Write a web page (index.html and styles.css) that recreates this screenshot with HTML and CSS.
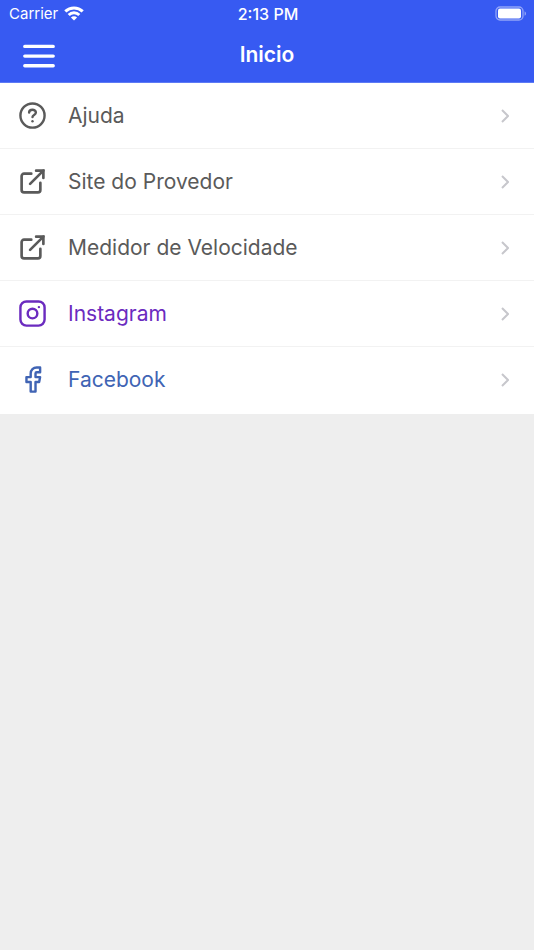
FILE: index.html
```html
<!DOCTYPE html>
<html lang="pt">

<head>
    <meta charset="utf-8">
    <meta name="viewport" content="width=device-width, initial-scale=1">
    <title>Inicio</title>
    <link rel="stylesheet" href="styles.css">
</head>

<body>
    <header class="header">
        <div class="status">
            <div class="carrier">
                <span>Carrier</span>
                <svg width="20" height="15" viewBox="0 0 20 15" fill="none" stroke="#fff" stroke-width="3">
                    <path d="M1.3 5.4a12.5 12.5 0 0 1 17.4 0" />
                    <path d="M4.7 9a7.6 7.6 0 0 1 10.6 0" />
                    <path d="M10 14.6L6.9 11.5a4.4 4.4 0 0 1 6.2 0z" fill="#fff" stroke="none" />
                </svg>
            </div>
            <span class="time">2:13 PM</span>
            <svg class="battery" width="32" height="15" viewBox="0 0 32 15">
                <rect x="1" y="1" width="27" height="13" rx="4" fill="none" stroke="#fff" stroke-opacity="0.45" stroke-width="1.3" />
                <rect x="3" y="2.6" width="23" height="9.8" rx="2" fill="#fff" />
                <path d="M29.6 5.2v4.6c1.8-.8 1.8-3.8 0-4.6z" fill="#fff" fill-opacity="0.5" />
            </svg>
        </div>
        <div class="navbar">
            <button class="menu-button" type="button" aria-label="Menu">
                <svg width="32" height="26" viewBox="0 0 32 26" stroke="#fff" stroke-width="3.4" stroke-linecap="round">
                    <path d="M1.8 4.4h28.4M1.8 14.1h28.4M1.8 23.8h28.4" />
                </svg>
            </button>
            <h1 class="title">Inicio</h1>
        </div>
    </header>

    <nav class="list">
        <a class="item" href="#ajuda">
            <svg class="icon" viewBox="0 0 24 24">
                <circle cx="12" cy="12" r="10" />
                <path d="M9.2 9.6c0-3.1 5.6-3.1 5.6 0 0 2-2.8 1.9-2.8 3.6" />
                <path d="M12 16.8v.01" />
            </svg>
            <span class="label">Ajuda</span>
            <svg class="chevron" viewBox="0 0 8 14"><path d="M1 1l6 6-6 6" /></svg>
        </a>
        <a class="item" href="#site">
            <svg class="icon link" viewBox="0 0 24 24">
                <path d="M18.5 13v6a2 2 0 0 1-2 2H5a2 2 0 0 1-2-2V7.5a2 2 0 0 1 2-2h6" />
                <path d="M15 3h6v6" />
                <path d="M10 14L21 3" />
            </svg>
            <span class="label">Site do Provedor</span>
            <svg class="chevron" viewBox="0 0 8 14"><path d="M1 1l6 6-6 6" /></svg>
        </a>
        <a class="item" href="#medidor">
            <svg class="icon link" viewBox="0 0 24 24">
                <path d="M18.5 13v6a2 2 0 0 1-2 2H5a2 2 0 0 1-2-2V7.5a2 2 0 0 1 2-2h6" />
                <path d="M15 3h6v6" />
                <path d="M10 14L21 3" />
            </svg>
            <span class="label">Medidor de Velocidade</span>
            <svg class="chevron" viewBox="0 0 8 14"><path d="M1 1l6 6-6 6" /></svg>
        </a>
        <a class="item instagram" href="#instagram">
            <svg class="icon" viewBox="0 0 24 24">
                <rect x="2" y="2" width="20" height="20" rx="5" />
                <circle cx="12" cy="12" r="4" />
                <circle cx="17.3" cy="6.7" r="1" fill="currentColor" stroke="none" />
            </svg>
            <span class="label">Instagram</span>
            <svg class="chevron" viewBox="0 0 8 14"><path d="M1 1l6 6-6 6" /></svg>
        </a>
        <a class="item facebook" href="#facebook">
            <svg class="icon" viewBox="0 0 24 24">
                <path d="M18.3 2h-2.8a5 5 0 0 0-5 5v3H7v4h3.5v8h4v-8h3l.8-4h-3.8V7a1 1 0 0 1 1-1h2.8z" />
            </svg>
            <span class="label">Facebook</span>
            <svg class="chevron" viewBox="0 0 8 14"><path d="M1 1l6 6-6 6" /></svg>
        </a>
    </nav>
</body>

</html>
```
FILE: styles.css
```css
body {
    margin: 0;
    background-color: #eeeeee;
    font-family: Inter, "Liberation Sans", sans-serif;
}

.header {
    background-color: #375af2;
    color: white;
    border-bottom: 1px solid #5d7af5;
}

.status {
    display: grid;
    grid-template-columns: 1fr auto 1fr;
    align-items: center;
    height: 27px;
    padding: 0 7px 0 9px;
    font-size: 16px;
}

.carrier {
    display: flex;
    align-items: center;
    gap: 6px;
    font-size: 15px;
}

.time {
    font-weight: 500;
}

.battery {
    justify-self: end;
}

.navbar {
    display: grid;
    grid-template-columns: 1fr auto 1fr;
    align-items: center;
    height: 55px;
    padding: 0 23px;
}

.menu-button {
    display: flex;
    justify-self: start;
    padding: 0;
    border: none;
    background: none;
}

.title {
    margin: 0;
    font-size: 21px;
    font-weight: 600;
}

.list {
    padding-bottom: 1px;
    background-color: white;
}

.item {
    display: flex;
    align-items: center;
    height: 65px;
    padding: 0 25px 0 18px;
    border-bottom: 1px solid #f2f2f2;
    color: #5a5a5a;
    text-decoration: none;
}

.item:last-child {
    border-bottom-color: white;
}

.icon {
    width: 29px;
    height: 29px;
    fill: none;
    stroke: currentColor;
    stroke-width: 2;
    stroke-linecap: round;
    stroke-linejoin: round;
}

.link {
    stroke-width: 2.2;
    stroke-linejoin: miter;
}

.label {
    flex: 1;
    margin-left: 21px;
    font-size: 21px;
}

.chevron {
    width: 8px;
    height: 14px;
    fill: none;
    stroke: #c7c7cc;
    stroke-width: 2;
}

.instagram {
    color: #6b2bbf;
}

.facebook {
    color: #4064b4;
}
```
